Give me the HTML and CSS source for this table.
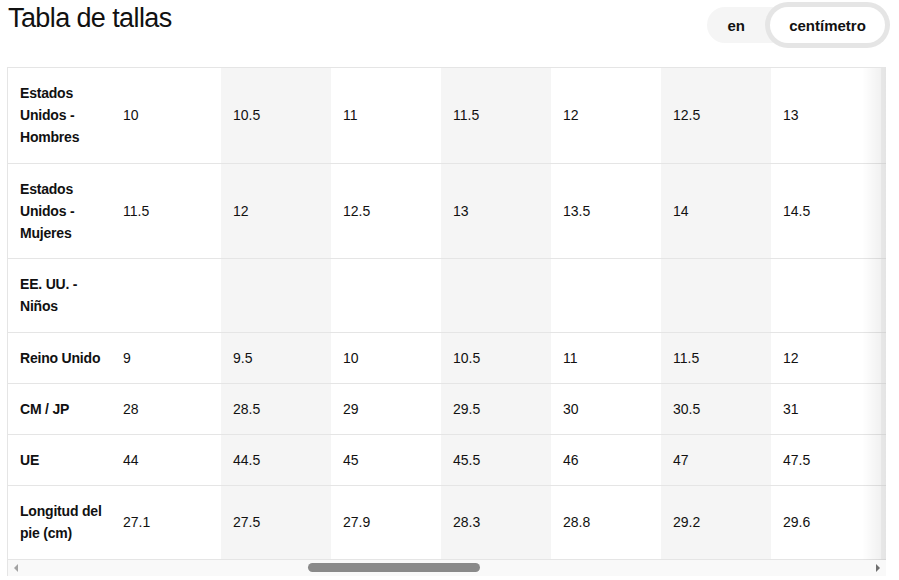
FILE: index.html
```html
<!DOCTYPE html>
<html lang="es">
<head>
<meta charset="utf-8">
<title>Tabla de tallas</title>
<link rel="stylesheet" href="styles.css">
</head>
<body>
<div class="page">
  <header class="head">
    <h1 class="title">Tabla de tallas</h1>
    <div class="toggle">
      <button class="opt">en</button>
      <button class="opt opt-active">centímetro</button>
    </div>
  </header>

  <div class="frame">
    <div class="clip">
      <table class="sizes">
        <colgroup>
          <col class="c-label">
          <col class="c-w"><col class="c-g"><col class="c-w"><col class="c-g">
          <col class="c-w"><col class="c-g"><col class="c-w"><col class="c-g">
        </colgroup>
        <tbody>
          <tr><th>Estados Unidos - Hombres</th><td>10</td><td>10.5</td><td>11</td><td>11.5</td><td>12</td><td>12.5</td><td>13</td><td></td></tr>
          <tr><th>Estados Unidos - Mujeres</th><td>11.5</td><td>12</td><td>12.5</td><td>13</td><td>13.5</td><td>14</td><td>14.5</td><td></td></tr>
          <tr><th>EE. UU. - Niños</th><td></td><td></td><td></td><td></td><td></td><td></td><td></td><td></td></tr>
          <tr><th>Reino Unido</th><td>9</td><td>9.5</td><td>10</td><td>10.5</td><td>11</td><td>11.5</td><td>12</td><td></td></tr>
          <tr><th>CM / JP</th><td>28</td><td>28.5</td><td>29</td><td>29.5</td><td>30</td><td>30.5</td><td>31</td><td></td></tr>
          <tr><th>UE</th><td>44</td><td>44.5</td><td>45</td><td>45.5</td><td>46</td><td>47</td><td>47.5</td><td></td></tr>
          <tr><th>Longitud del pie (cm)</th><td>27.1</td><td>27.5</td><td>27.9</td><td>28.3</td><td>28.8</td><td>29.2</td><td>29.6</td><td></td></tr>
        </tbody>
      </table>
      <div class="fade"></div>
    </div>
    <div class="scrollbar">
      <span class="arrow arrow-left"></span>
      <div class="track"><div class="thumb"></div></div>
      <span class="arrow arrow-right"></span>
    </div>
  </div>
</div>
</body>
</html>
```
FILE: styles.css
```css
* { box-sizing: border-box; }
html, body { margin: 0; padding: 0; background: #fff; }
body {
  font-family: "Liberation Sans", Arial, sans-serif;
  color: #111;
}
.page {
  width: 899px;
  padding: 4px 8px 0 8px;
}
.head {
  display: flex;
  justify-content: space-between;
  align-items: flex-start;
  height: 63px;
}
.title {
  margin: 0;
  font-size: 27px;
  line-height: 28px;
  font-weight: 400;
  letter-spacing: -0.6px;
  color: #111;
}
.toggle {
  display: flex;
  align-items: center;
  margin-top: 3px;
  margin-right: 6px;
  height: 36px;
  background: #f5f5f5;
  border-radius: 18px;
}
.opt {
  border: 0;
  background: transparent;
  font-family: "Liberation Sans", Arial, sans-serif;
  font-size: 15px;
  font-weight: 700;
  color: #111;
  height: 36px;
  padding: 0 20px;
  border-radius: 18px;
  cursor: pointer;
}
.opt-active {
  background: #fff;
  width: 115px;
  height: 36px;
  padding: 0;
  margin-left: 5px;
  box-shadow: 0 0 0 5px #e5e5e5;
}
.frame {
  margin-left: -1px;
  width: 879px;
  border-left: 1px solid #e5e5e5;
  border-top: 1px solid #e5e5e5;
}
.clip {
  position: relative;
  overflow: hidden;
}
.sizes {
  table-layout: fixed;
  border-collapse: collapse;
  width: 983px;
  font-size: 14px;
  line-height: 22.2px;
}
.c-label { width: 103px; }
.c-w { width: 110px; }
.c-g { width: 110px; background: #f5f5f5; }
.sizes th,
.sizes td {
  padding: 14px 4px 14px 12px;
  border-bottom: 1px solid #e5e5e5;
  vertical-align: middle;
  text-align: left;
}
.sizes th {
  font-weight: 700;
  letter-spacing: -0.2px;
}
.sizes td { font-weight: 400; }
.fade {
  position: absolute;
  top: 0;
  right: 0;
  bottom: 0;
  width: 24px;
  background: linear-gradient(to right, rgba(0,0,0,0), rgba(0,0,0,0.07));
  pointer-events: none;
}
.scrollbar {
  display: flex;
  align-items: center;
  height: 16px;
  background: #f9f9f9;
}
.arrow {
  width: 16px;
  height: 16px;
  display: flex;
  align-items: center;
  justify-content: center;
}
.arrow::before {
  content: "";
  border-top: 4px solid transparent;
  border-bottom: 4px solid transparent;
}
.arrow-left::before { border-right: 4px solid #a3a3a3; }
.arrow-right::before { border-left: 4px solid #6f6f6f; }
.track {
  flex: 1;
  height: 16px;
  display: flex;
  align-items: center;
  padding-left: 284px;
}
.thumb {
  width: 172px;
  height: 9px;
  border-radius: 5px;
  background: #8a8a8a;
}
```
